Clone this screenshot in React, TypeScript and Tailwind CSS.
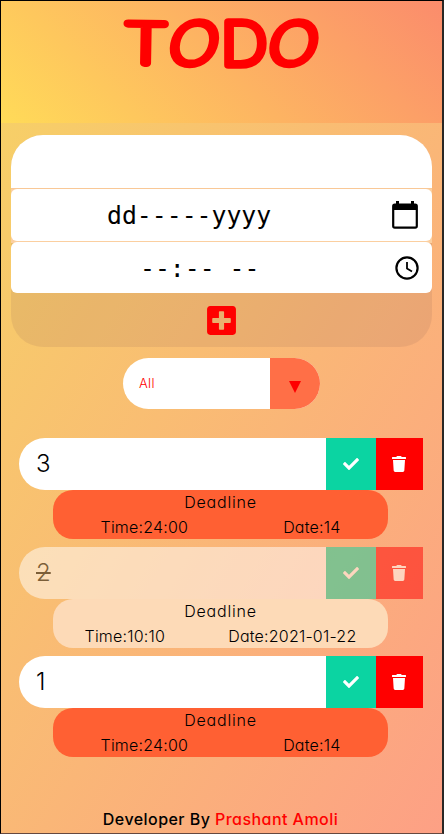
import { FaCheck, FaTrash, FaPlusSquare } from "react-icons/fa";

type Todo = {
  text: string;
  time: string;
  date: string;
  done?: boolean;
};

const todos: Todo[] = [
  { text: "3", time: "24:00", date: "14" },
  { text: "2", time: "10:10", date: "2021-01-22", done: true },
  { text: "1", time: "24:00", date: "14" },
];

function Title() {
  return (
    <header className="h-[122px] shrink-0 bg-[linear-gradient(45deg,#ffdb58,#fb8c6c)]">
      <svg
        width="441"
        height="80"
        viewBox="1 1 441 80"
        className="block"
        fill="#ff0000"
        stroke="#ff0000"
        strokeWidth="7.7"
        strokeLinejoin="round"
        fontFamily="Inter, sans-serif"
        fontWeight="100"
        fontSize="60"
        textAnchor="middle"
      >
        <text transform="translate(145.5 63.3) rotate(1) scale(1.22 .92)">T</text>
        <text transform="translate(190.5 64) skewX(-11) scale(1.1 .95)">O</text>
        <text transform="translate(244 65) scale(1.08 .98)">D</text>
        <text transform="translate(290 64) skewX(-11) scale(1.1 .95)">O</text>
      </svg>
    </header>
  );
}

function CalendarIcon() {
  return (
    <svg width="26" height="28" viewBox="0 0 26 28" fill="none">
      <rect x="1.2" y="3.7" width="23.6" height="23" rx="1.6" stroke="#000" strokeWidth="2.2" />
      <path d="M1 4h24v5H1zM4 0h3v5H4zM19 0h3v5h-3z" fill="#000" />
    </svg>
  );
}

function ClockIcon() {
  return (
    <svg width="24" height="24" viewBox="0 0 24 24" fill="none" stroke="#000">
      <circle cx="12" cy="12" r="10.6" strokeWidth="2.2" />
      <path d="M12 6v6.6l5 3" strokeWidth="1.8" />
    </svg>
  );
}

function TodoForm() {
  return (
    <form className="mx-[10px] mt-3 flex h-[212px] flex-col overflow-hidden rounded-[32px] bg-[#96645a]/15">
      <div className="h-[53px] bg-white" />
      <div className="h-px bg-[#f9c896]" />
      <div className="bg-[#fbcfa0]">
        <div className="flex h-[52px] items-center rounded-md bg-white pr-[14px] pl-[96px]">
          <span className="flex-1 pt-px font-['DejaVu_Sans_Mono',monospace] text-[24.8px] text-black">dd-----yyyy</span>
          <CalendarIcon />
        </div>
        <div className="mt-px h-px" />
      </div>
      <div className="-mt-px flex h-[51px] shrink-0 items-center rounded-md bg-white pr-[13px] pl-[129px]">
        <span className="flex-1 pt-0.5 font-['DejaVu_Sans_Mono',monospace] text-[24.8px] whitespace-pre text-black">--:-- --</span>
        <ClockIcon />
      </div>
      <button type="button" className="flex flex-1 items-center justify-center text-[#ff0000]">
        <FaPlusSquare size={33} />
      </button>
    </form>
  );
}

function Filter() {
  return (
    <div className="mt-[11px] ml-[122px] flex h-[51px] w-[197px] shrink-0 overflow-hidden rounded-full bg-white">
      <span className="flex flex-1 items-center pl-4 text-[13px] font-light tracking-[0.3px] text-[#ff0000]">All</span>
      <span className="flex w-[50px] items-center justify-center bg-[#ff6f47]">
        <svg width="12" height="12" viewBox="0 0 12 12" className="mt-1.5">
          <path d="M0 0h12L6 12z" fill="#ff0000" />
        </svg>
      </span>
    </div>
  );
}

function TodoItem({ text, time, date, done }: Todo) {
  return (
    <li className="h-[109px]">
      <div className={`ml-[18px] flex h-[52px] w-[404px] ${done ? "opacity-50" : ""}`}>
        <span className="flex flex-1 items-center rounded-l-full bg-white pl-[17px] text-[24px] font-light">
          <span className={done ? "line-through decoration-2" : ""}>{text}</span>
        </span>
        <span className="flex w-[50px] items-center justify-center bg-[#0bd4a2] text-white">
          <FaCheck size={16} />
        </span>
        <span className="flex w-[47px] items-center justify-center bg-[#ff0000] pr-0.5 text-white">
          <FaTrash size={16} />
        </span>
      </div>
      <div
        className={`ml-[52px] h-[49px] w-[335px] rounded-[20px] text-center text-[16px] leading-[25px] font-light ${
          done ? "bg-[#fddab7]" : "bg-[#ff6033]"
        }`}
      >
        <div className="tracking-[0.8px]">Deadline</div>
        <div className="flex justify-around tracking-[0.2px]">
          <span>Time:{time}</span>
          <span>Date:{date}</span>
        </div>
      </div>
    </li>
  );
}

export default function App() {
  return (
    <div className="flex h-[834px] w-[444px] flex-col overflow-hidden border-t border-r-2 border-b border-l border-t-black border-r-[#292725] border-b-[#65483f] border-l-black bg-[linear-gradient(120deg,#f6d365,#fda085)] font-['Inter',sans-serif] text-black [font-feature-settings:'cv11']">
      <Title />
      <TodoForm />
      <Filter />
      <ul className="mt-[29px]">
        {todos.map((todo) => (
          <TodoItem key={todo.text} {...todo} />
        ))}
      </ul>
      <footer className="mt-[42px] pr-0.5 text-center text-[16px] leading-6 font-medium tracking-[0.45px] whitespace-nowrap">
        Developer By <span className="text-[#ff0000]">Prashant Amoli</span>
      </footer>
    </div>
  );
}
